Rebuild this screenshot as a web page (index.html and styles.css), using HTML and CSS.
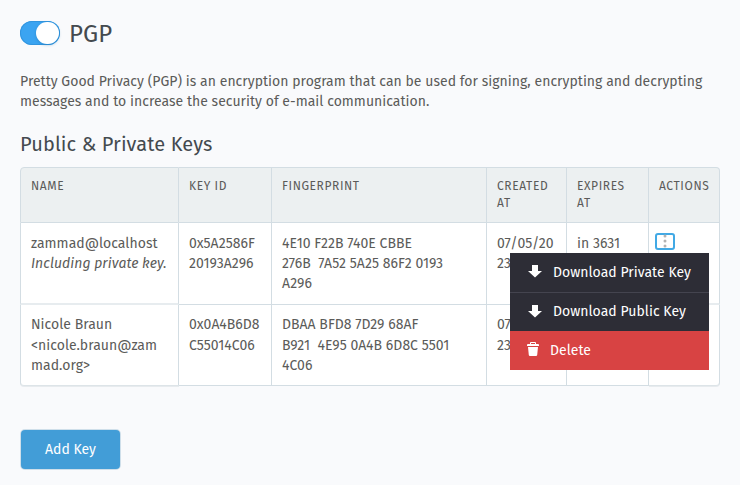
FILE: index.html
```html
<!DOCTYPE html>
<html lang="en">
<head>
<meta charset="utf-8">
<title>PGP</title>
<link rel="stylesheet" href="styles.css">
</head>
<body>
<main class="page">
  <header class="page-header">
    <span class="switch" role="switch" aria-checked="true"><span class="switch-knob"></span></span>
    <h1>PGP</h1>
  </header>
  <p class="intro">Pretty Good Privacy (PGP) is an encryption program that can be used for signing, encrypting and decrypting<br>messages and to increase the security of e-mail communication.</p>
  <h2>Public &amp; Private Keys</h2>
  <div class="keys">
    <div class="row head">
      <div>NAME</div><div>KEY ID</div><div>FINGERPRINT</div><div>CREATED<br>AT</div><div>EXPIRES<br>AT</div><div>ACTIONS</div>
    </div>
    <div class="row first">
      <div>zammad@localhost<br><i>Including private key.</i></div>
      <div>0x5A2586F<br>20193A296</div>
      <div>4E10 F22B 740E CBBE<br>276B&nbsp; 7A52 5A25 86F2 0193<br>A296</div>
      <div>07/05/20<br>23</div>
      <div>in 3631</div>
      <div class="actions">
        <span class="trigger"><svg width="4" height="14" viewBox="0 0 4 14"><g fill="#b3b3b3"><circle cx="2" cy="2" r="1.5"/><circle cx="2" cy="7" r="1.5"/><circle cx="2" cy="12" r="1.5"/></g></svg></span>
        <div class="menu">
          <div class="item"><svg class="arrow" width="14" height="13" viewBox="0 0 14 13"><path fill="#fff" d="M4 0h6v6h4L7 12.500 0 6h4z"/></svg><span>Download Private Key</span></div>
          <div class="item"><svg class="arrow" width="14" height="13" viewBox="0 0 14 13"><path fill="#fff" d="M4 0h6v6h4L7 12.500 0 6h4z"/></svg><span>Download Public Key</span></div>
          <div class="item danger"><svg width="12" height="14" viewBox="0 0 12 14"><path fill="#fff" fill-rule="evenodd" d="M3 2V1Q3 0 4 0h4q1 0 1 1v1h2q1 0 1 1v1H0V3q0-1 1-1zM4 1v1h4V1zM1 5h10l-.8 8q-.1 1-1.200 1H3q-1.100 0-1.200-1z"/></svg><span>Delete</span></div>
        </div>
      </div>
    </div>
    <div class="row last">
      <div>Nicole Braun<br>&lt;nicole.braun@zam<br>mad.org&gt;</div>
      <div>0x0A4B6D8<br>C55014C06</div>
      <div>DBAA BFD8 7D29 68AF<br>B921&nbsp; 4E95 0A4B 6D8C 5501<br>4C06</div>
      <div>07/05/20<br>23</div>
      <div></div>
      <div></div>
    </div>
  </div>
  <button class="add">Add Key</button>
</main>
</body>
</html>
```
FILE: styles.css
```css
* { box-sizing: border-box; }
body {
  margin: 0;
  height: 485px;
  overflow: hidden;
  background: #f9fafc;
  color: #5b5b59;
  font: 14px/20px "Fira Sans", "Noto Sans", sans-serif;
  letter-spacing: .03px;
  white-space: nowrap;
}
.page { padding: 21px 20px 0; }
.page-header { display: flex; align-items: center; height: 24px; }
.switch {
  display: flex;
  justify-content: flex-end;
  width: 40px;
  height: 24px;
  padding: 1px;
  border-radius: 12px;
  background: #3ba4f1;
  box-shadow: inset 0 0 0 1px #3295df;
}
.switch-knob { width: 23px; height: 22px; border-radius: 11px; background: #fff; box-shadow: 0 1px 3px #1668a566; }
h1, h2 { margin: 0; font-weight: 400; color: #444a4f; }
h1 { margin: 2px 0 0 9px; font-size: 24px; line-height: 24px; }
.intro { margin: 27px 0 0; }
h2 { margin-top: 19px; font-size: 20px; line-height: 26px; letter-spacing: .1px; }
.keys { margin-top: 10px; }
.row { display: grid; grid-template-columns: 159px 93px 215px 80px 82px 71px; }
.row > div {
  padding: 11px 0 0 10px;
  border: solid #d3dde3;
  border-width: 0 1px 1px 0;
  background: #fff;
}
.row > div:first-child { border-left-width: 1px; }
.row.head { height: 56px; font-size: 12px; line-height: 17px; }
.row.head > div { border-top-width: 1px; background: #ecf0f1; padding-top: 10px; letter-spacing: .6px; }
.row.head > div:first-child { border-top-left-radius: 4px; }
.row.head > div:last-child { border-top-right-radius: 4px; }
.row.first { height: 82px; }
.row.first > div:first-child, .row.first > div:last-child { border-bottom: 2px solid #e7ecef; }
.row.last { height: 81px; }
.row.last > div { padding-top: 10px; line-height: 20.5px; }
.row.last > div:first-child, .row.last > div:last-child { border-bottom-color: #dde4e8; box-shadow: 0 1px #e7ebee; }
.row.last > div:first-child { border-bottom-left-radius: 4px; }
.row.last > div:last-child { border-bottom-right-radius: 4px; }
.row > .actions { position: relative; padding: 10px 0 0 6px; }
.trigger {
  display: flex;
  align-items: center;
  justify-content: center;
  width: 20px;
  height: 17px;
  border: 2px solid #41a9e5;
  border-radius: 3px;
}
.trigger svg { margin-top: -1px; }
.menu {
  position: absolute;
  z-index: 1;
  top: 30px;
  right: 10px;
  width: 199px;
  background: #2d2d36;
  color: #fff;
}
.item { display: flex; align-items: center; height: 39px; padding-left: 18px; }
.item + .item { border-top: 1px solid #44444f; }
.item span { margin-left: 11px; }
.item .arrow { margin-top: -2px; }
.item.danger { padding-left: 17px; background: #d84343; border-top-color: #d84343; }
.item.danger svg { margin-top: -4px; }
.add {
  display: block;
  width: 99px;
  height: 39px;
  margin: 44px 0 0 1px;
  padding: 0;
  border: 0;
  border-radius: 4px;
  background: #429dd7;
  box-shadow: 0 0 0 1px #cfdfea;
  color: #fff;
  font: inherit;
}
```
